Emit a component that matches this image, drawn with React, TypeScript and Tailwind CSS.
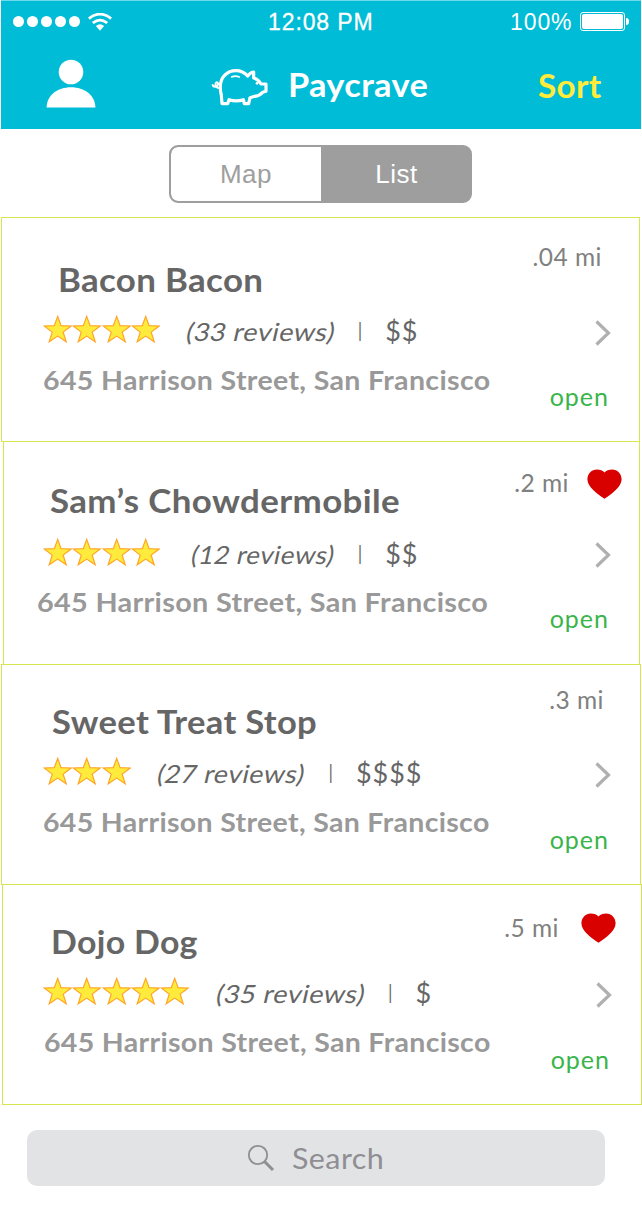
type Truck = {
  name: string;
  stars: number;
  reviews: string;
  price: string;
  distance: string;
  liked: boolean;
  card: string;
  title: string;
  rating: string;
  reviewsBox: string;
  reviewsText: string;
  address: string;
  distanceRow: string;
  heart: string;
  chevron: string;
  open: string;
};

const trucks: Truck[] = [
  {
    name: "Bacon Bacon",
    stars: 4,
    reviews: "(33 reviews)",
    price: "$$",
    distance: ".04 mi",
    liked: false,
    card: "ml-[1px] w-[639px] h-[225px]",
    title: "mt-[42px] ml-[56px] tracking-[0.3px] scale-x-[1.09]",
    rating: "mt-4 ml-[41px]",
    reviewsBox: "ml-[27px] w-[170px]",
    reviewsText: "scale-x-[1.08]",
    address: "mt-[19px] ml-[41px] scale-x-[1.098]",
    distanceRow: "mt-[24px] mr-[37px]",
    heart: "",
    chevron: "mt-[46px] mr-[28px]",
    open: "mt-[33px] mr-[30px]",
  },
  {
    name: "Sam’s Chowdermobile",
    stars: 4,
    reviews: "(12 reviews)",
    price: "$$",
    distance: ".2 mi",
    liked: true,
    card: "ml-[3px] w-[637px] h-[224px] -mt-px",
    title: "mt-[39px] ml-[46px] tracking-[0.35px] scale-x-[1.09]",
    rating: "mt-[18px] ml-[39px]",
    reviewsBox: "ml-[32px] w-[165px]",
    reviewsText: "scale-x-[1.04]",
    address: "mt-[18px] ml-[33px] scale-x-[1.107]",
    distanceRow: "mt-[26px] mr-[17px]",
    heart: "mt-px ml-[18px]",
    chevron: "mt-[42px] mr-[28px]",
    open: "mt-[33px] mr-[30px]",
  },
  {
    name: "Sweet Treat Stop",
    stars: 3,
    reviews: "(27 reviews)",
    price: "$$$$",
    distance: ".3 mi",
    liked: false,
    card: "ml-[1px] w-[640px] h-[221px] -mt-px",
    title: "mt-[37px] ml-[50px] tracking-[0.3px] scale-x-[1.08]",
    rating: "mt-[16px] ml-[41px]",
    reviewsBox: "ml-[27px] w-[170px]",
    reviewsText: "scale-x-[1.07]",
    address: "mt-[19px] ml-[41px] scale-x-[1.096]",
    distanceRow: "mt-[20px] mr-[36px]",
    heart: "",
    chevron: "mt-[45px] mr-[29px]",
    open: "mt-[34px] mr-[31px]",
  },
  {
    name: "Dojo Dog",
    stars: 5,
    reviews: "(35 reviews)",
    price: "$",
    distance: ".5 mi",
    liked: true,
    card: "ml-[2px] w-[640px] h-[221px] -mt-px",
    title: "mt-[37px] ml-[48px] tracking-[0.3px] scale-x-[1.06]",
    rating: "mt-[16px] ml-[40px]",
    reviewsBox: "ml-[28px] w-[170px]",
    reviewsText: "scale-x-[1.08]",
    address: "mt-[19px] ml-[41px] scale-x-[1.096]",
    distanceRow: "mt-[28px] mr-[25px]",
    heart: "ml-[22px]",
    chevron: "mt-[37px] mr-[29px]",
    open: "mt-[34px] mr-[31px]",
  },
];

function Star() {
  return (
    <svg viewBox="0 0 29.3 29" className="-mt-px h-[29px] w-[29.3px] shrink-0">
      <path
        d="M14.7 1.4 18.1 10.7 28.2 11 20.2 17.1 23.2 26.8 14.7 21.1 6.2 26.8 9.2 17.1 1.2 11 11.3 10.7Z"
        fill="#ffeb3b"
        stroke="#ffa426"
        strokeWidth="1.2"
      />
    </svg>
  );
}

function Heart({ className }: { className: string }) {
  return (
    <svg viewBox="0 0 35 30" className={`h-[30px] w-[35px] ${className}`}>
      <path
        d="M17.5 29.7C11 25.2 0.4 18.3 0.4 10.2C0.4 4.5 4.8 0.4 9.8 0.4C13 0.4 16 1.5 17.5 3.4C19 1.5 22 0.4 25.2 0.4C30.2 0.4 34.6 4.5 34.6 10.2C34.6 18.3 24 25.2 17.5 29.7Z"
        fill="#d90000"
      />
    </svg>
  );
}

function Pig() {
  return (
    <svg viewBox="630 200 180 120" className="h-[40px] w-[60px]" fill="none" stroke="#fff" strokeLinejoin="round" strokeLinecap="round">
      <path
        strokeWidth="9.5"
        d="M661 262C660 232 680 211 708 211C722 211 733 216 743 227Q750 217 761 215L761 233Q776 238 783 251L798 251L798 273L788 276Q779 286 764 288L750 292L746 310L733 310L730 298Q709 305 687 298L683 310L666 310L664 284Q661 274 661 262Z"
      />
      <path strokeWidth="6" d="M660 262C650 265 644 256 647 249C650 243 656 247 654 253C651 261 640 262 638 254" />
      <path strokeWidth="5" d="M695 230Q706 225 718 230" />
      <circle cx="771" cy="249" r="4" fill="#fff" stroke="none" />
    </svg>
  );
}

function TruckCard({ truck }: { truck: Truck }) {
  return (
    <article className={`flex shrink-0 justify-between border border-[#d6e650] bg-white ${truck.card}`}>
      <div className="flex w-[500px] flex-col whitespace-nowrap">
        <h2 className={`h-10 origin-left text-[32px] leading-10 font-bold text-[#666] ${truck.title}`}>{truck.name}</h2>
        <div className={`flex h-[30px] text-[25px] leading-[30px] text-[#666] ${truck.rating}`}>
          <div className="flex">
            {Array.from({ length: truck.stars }, (_, i) => (
              <Star key={i} />
            ))}
          </div>
          <div className={truck.reviewsBox}>
            <span className={`inline-block origin-left ${truck.reviewsText}`}>
              <span className="inline-block -skew-x-12 tracking-[0.45px]">{truck.reviews}</span>
            </span>
          </div>
          <span className="w-[28px] font-light">l</span>
          <span className="text-[27px] tracking-[1px]">{truck.price}</span>
        </div>
        <p
          className={`h-[30px] origin-left text-[26px] leading-[30px] font-bold tracking-[0.3px] text-[#999] ${truck.address}`}
        >
          645 Harrison Street, San Francisco
        </p>
      </div>
      <div className="flex flex-col items-end whitespace-nowrap">
        <div className={`flex h-[30px] text-[24.5px] leading-[30px] tracking-[0.5px] text-[#808080] ${truck.distanceRow}`}>
          <span>{truck.distance}</span>
          {truck.liked && <Heart className={truck.heart} />}
        </div>
        <svg viewBox="0 0 16 30" className={`h-[30px] w-4 ${truck.chevron}`} fill="none" stroke="#b0b0b0" strokeWidth="3.2">
          <path d="M1.5 3.5 13.5 15 1.5 26.5" />
        </svg>
        <span className={`h-[30px] text-[25px] leading-[30px] tracking-[1px] text-[#39b54a] ${truck.open}`}>open</span>
      </div>
    </article>
  );
}

export default function App() {
  return (
    <main className="flex h-[1211px] w-[642px] flex-col overflow-hidden bg-white font-['Lato','Liberation_Sans',sans-serif]">
      <header className="ml-px flex h-[129px] w-[640px] shrink-0 flex-col border-t border-[#6fdae9] bg-[#00bcd6] text-white">
        <div className="flex h-[41px] items-center font-['Liberation_Sans',Arial,sans-serif] whitespace-nowrap">
          <div className="flex w-[267px] items-center pl-3">
            <div className="flex gap-[3px]">
              {[0, 1, 2, 3, 4].map((n) => (
                <span key={n} className="size-[11px] rounded-full bg-white" />
              ))}
            </div>
            <svg viewBox="0 0 24 18" className="ml-[8px] h-[18px] w-6" fill="none" stroke="#fff" strokeWidth="2.8">
              <path d="M.9 5.7Q12-3.4 23.1 5.7M4.8 10Q12 4.2 19.2 10" />
              <path d="M7.9 13Q12 9.6 16.1 13L12 17.8Z" fill="#fff" stroke="none" />
            </svg>
          </div>
          <span className="w-[242px] text-[23px] leading-10 tracking-[0.9px] [-webkit-text-stroke:0.3px_#fff]">12:08 PM</span>
          <span className="w-[70px] text-[23px] leading-10 tracking-[0.9px]">100%</span>
          <div className="flex items-center">
            <div className="h-[19px] w-[45px] rounded-[3px] border border-white p-px">
              <div className="h-full rounded-[2px] bg-white" />
            </div>
            <span className="ml-px h-[7px] w-[3px] rounded-r-full bg-white" />
          </div>
        </div>
        <div className="flex h-[87px] whitespace-nowrap">
          <svg viewBox="0 0 50 50" className="mt-[17px] ml-[45px] h-[50px] w-[50px]" fill="#fff">
            <circle cx="25" cy="13" r="12.3" />
            <path d="M.6 48.5C.6 36.5 11.5 28.3 25 28.3S49.4 36.5 49.4 48.5Z" />
          </svg>
          <div className="mt-[25px] ml-[114px]">
            <Pig />
          </div>
          <h1 className="mt-[21px] ml-[18px] w-[250px] origin-left scale-x-[1.075] text-[32px] leading-[44px] font-bold tracking-[0.3px]">
            Paycrave
          </h1>
          <button className="mt-[22px] h-[44px] origin-left scale-x-[1.04] text-[32px] leading-[44px] font-bold tracking-[0.3px] text-[#ffeb3b]">
            Sort
          </button>
        </div>
      </header>

      <div className="mt-4 mb-[14px] ml-[169px] flex h-[58px] w-[303px] shrink-0 overflow-hidden rounded-[9px] border-2 border-[#9e9e9e] bg-[#9e9e9e] font-['Liberation_Sans',Arial,sans-serif] text-[26px] leading-[53px]">
        <button className="w-[150px] rounded-l-[7px] bg-white text-center tracking-[0.5px] text-[#9e9e9e]">Map</button>
        <button className="flex-1 pl-0.5 text-center tracking-[0.5px] text-white">List</button>
      </div>

      {trucks.map((truck) => (
        <TruckCard key={truck.name} truck={truck} />
      ))}

      <div className="mt-[25px] ml-[27px] flex h-[56px] w-[578px] shrink-0 items-center rounded-[10px] bg-[#e2e3e5] pl-[220px] text-[#8e8e93]">
        <svg viewBox="0 0 28 28" className="h-[28px] w-[28px]" fill="none" stroke="#8e8e93">
          <circle cx="11" cy="11" r="9.2" strokeWidth="1.8" />
          <path d="M17.5 17.5 26 26" strokeWidth="3" />
        </svg>
        <span className="ml-[17px] origin-left scale-x-[1.05] text-[29px] leading-[56px] tracking-[0.4px]">Search</span>
      </div>
    </main>
  );
}
